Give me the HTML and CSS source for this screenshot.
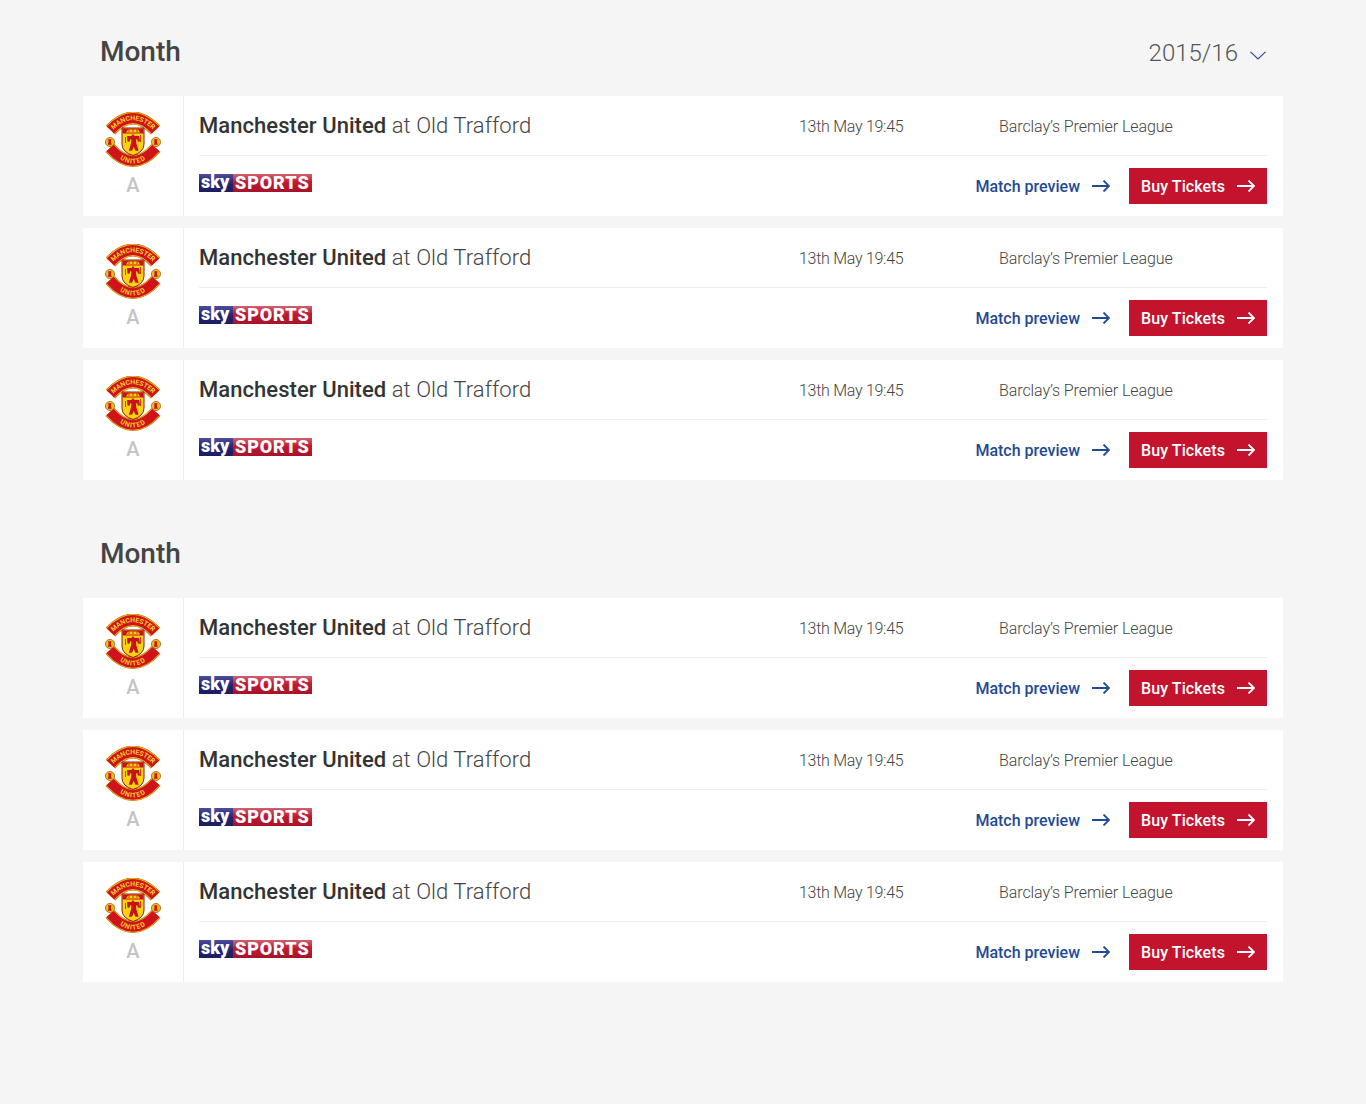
FILE: index.html
```html
<!DOCTYPE html>
<html lang="en">
  <head>
    <meta charset="utf-8">
    <title>Fixtures</title>
    <link rel="stylesheet" href="styles.css">
  </head>
  <body>
    <svg class="sprites" width="0" height="0" aria-hidden="true">
      <defs>
        <path id="crest-top" d="M6 20 Q28 -3.600 50 20" />
        <path id="crest-bottom" d="M6 39 Q28 64 50 39" />
        <symbol id="crest" viewBox="0 0 56 56">
          <path d="M5.500 18 Q28 -6 50.500 18" fill="none" stroke="#a8700c" stroke-width="13" />
          <path d="M5.500 18 Q28 -6 50.500 18" fill="none" stroke="#f0b818" stroke-width="12" />
          <path d="M5.500 18 Q28 -6 50.500 18" fill="none" stroke="#d0121b" stroke-width="10" />
          <text class="crest-text" font-size="6.800"><textPath href="#crest-top" startOffset="50%" text-anchor="middle">MANCHESTER</textPath></text>
          <path d="M5 36 Q28 62 51 36" fill="none" stroke="#a8700c" stroke-width="12" />
          <path d="M5 36 Q28 62 51 36" fill="none" stroke="#f0b818" stroke-width="11" />
          <path d="M5 36 Q28 62 51 36" fill="none" stroke="#d0121b" stroke-width="9.500" />
          <text class="crest-text crest-wide" font-size="6.800"><textPath href="#crest-bottom" startOffset="50%" text-anchor="middle">UNITED</textPath></text>
          <circle cx="5" cy="30" r="4.600" fill="#f0b818" stroke="#8a5a10" stroke-width=".7" />
          <circle cx="51" cy="30" r="4.600" fill="#f0b818" stroke="#8a5a10" stroke-width=".7" />
          <path d="M3.200 27.200h3.200l-.6 2.800 1 2.800H2.800l.8-2.800z" fill="#c5121b" />
          <path d="M49.200 27.200h3.200l-.6 2.800 1 2.800h-4l.8-2.800z" fill="#c5121b" />
          <path d="M17 16h22v16q0 8-11 11.500Q17 40 17 32z" fill="#fbd30c" stroke="#8c1a12" stroke-width="1" />
          <path d="M17.500 16.500h21v5h-21z" fill="#c5121b" />
          <path d="M21 20.500l2-3h10l2 3z" fill="#fbd30c" />
          <path d="M24 17v3M28 17v3M32 17v3" stroke="#c5121b" stroke-width=".9" />
          <path d="M22 24h4.500l.8-1.600h1.400l.8 1.600h4.500l1 5.500-2 .3-1-2.800-1 .8.4 3.600 2.200 7.400h-3.200l-1.700-4-1.700 4h-3.200l2.200-7.400.4-3.600-1-.8-1 2.800-2-.3z" fill="#c5121b" />
          <path d="M35.500 23v7M20.500 25v6" stroke="#c5121b" stroke-width=".8" />
        </symbol>
        <symbol id="arrow" viewBox="0 0 18 12">
          <path d="M0 6h17M11.500 .5 17 6l-5.500 5.500" fill="none" stroke="currentColor" stroke-width="1.800" />
        </symbol>
      </defs>
    </svg>

    <main class="page">
      <section class="month">
        <header class="month-head">
          <h2>Month</h2>
          <div class="season">
            <span>2015/16</span>
            <svg class="chevron" viewBox="0 0 16 9"><path d="M.5 .8 8 8l7.500-7.200" fill="none" stroke="#1f4a94" stroke-width="1.100" /></svg>
          </div>
        </header>

        <article class="fixture">
          <div class="badge"><svg class="crest"><use href="#crest" /></svg><span class="venue">A</span></div>
          <div class="details">
            <div class="info">
              <h3><strong>Manchester United</strong> at Old Trafford</h3>
              <span class="kickoff">13th May 19:45</span>
              <span class="league">Barclay’s Premier League</span>
            </div>
            <div class="actions">
              <div class="sky"><span class="sky-a">sky</span><span class="sky-b">SPORTS</span></div>
              <a class="preview" href="#">Match preview<svg class="arrow"><use href="#arrow" /></svg></a>
              <a class="buy" href="#">Buy Tickets<svg class="arrow"><use href="#arrow" /></svg></a>
            </div>
          </div>
        </article>

        <article class="fixture">
          <div class="badge"><svg class="crest"><use href="#crest" /></svg><span class="venue">A</span></div>
          <div class="details">
            <div class="info">
              <h3><strong>Manchester United</strong> at Old Trafford</h3>
              <span class="kickoff">13th May 19:45</span>
              <span class="league">Barclay’s Premier League</span>
            </div>
            <div class="actions">
              <div class="sky"><span class="sky-a">sky</span><span class="sky-b">SPORTS</span></div>
              <a class="preview" href="#">Match preview<svg class="arrow"><use href="#arrow" /></svg></a>
              <a class="buy" href="#">Buy Tickets<svg class="arrow"><use href="#arrow" /></svg></a>
            </div>
          </div>
        </article>

        <article class="fixture">
          <div class="badge"><svg class="crest"><use href="#crest" /></svg><span class="venue">A</span></div>
          <div class="details">
            <div class="info">
              <h3><strong>Manchester United</strong> at Old Trafford</h3>
              <span class="kickoff">13th May 19:45</span>
              <span class="league">Barclay’s Premier League</span>
            </div>
            <div class="actions">
              <div class="sky"><span class="sky-a">sky</span><span class="sky-b">SPORTS</span></div>
              <a class="preview" href="#">Match preview<svg class="arrow"><use href="#arrow" /></svg></a>
              <a class="buy" href="#">Buy Tickets<svg class="arrow"><use href="#arrow" /></svg></a>
            </div>
          </div>
        </article>
      </section>

      <section class="month">
        <header class="month-head">
          <h2>Month</h2>
        </header>

        <article class="fixture">
          <div class="badge"><svg class="crest"><use href="#crest" /></svg><span class="venue">A</span></div>
          <div class="details">
            <div class="info">
              <h3><strong>Manchester United</strong> at Old Trafford</h3>
              <span class="kickoff">13th May 19:45</span>
              <span class="league">Barclay’s Premier League</span>
            </div>
            <div class="actions">
              <div class="sky"><span class="sky-a">sky</span><span class="sky-b">SPORTS</span></div>
              <a class="preview" href="#">Match preview<svg class="arrow"><use href="#arrow" /></svg></a>
              <a class="buy" href="#">Buy Tickets<svg class="arrow"><use href="#arrow" /></svg></a>
            </div>
          </div>
        </article>

        <article class="fixture">
          <div class="badge"><svg class="crest"><use href="#crest" /></svg><span class="venue">A</span></div>
          <div class="details">
            <div class="info">
              <h3><strong>Manchester United</strong> at Old Trafford</h3>
              <span class="kickoff">13th May 19:45</span>
              <span class="league">Barclay’s Premier League</span>
            </div>
            <div class="actions">
              <div class="sky"><span class="sky-a">sky</span><span class="sky-b">SPORTS</span></div>
              <a class="preview" href="#">Match preview<svg class="arrow"><use href="#arrow" /></svg></a>
              <a class="buy" href="#">Buy Tickets<svg class="arrow"><use href="#arrow" /></svg></a>
            </div>
          </div>
        </article>

        <article class="fixture">
          <div class="badge"><svg class="crest"><use href="#crest" /></svg><span class="venue">A</span></div>
          <div class="details">
            <div class="info">
              <h3><strong>Manchester United</strong> at Old Trafford</h3>
              <span class="kickoff">13th May 19:45</span>
              <span class="league">Barclay’s Premier League</span>
            </div>
            <div class="actions">
              <div class="sky"><span class="sky-a">sky</span><span class="sky-b">SPORTS</span></div>
              <a class="preview" href="#">Match preview<svg class="arrow"><use href="#arrow" /></svg></a>
              <a class="buy" href="#">Buy Tickets<svg class="arrow"><use href="#arrow" /></svg></a>
            </div>
          </div>
        </article>
      </section>
    </main>
  </body>
</html>
```

FILE: styles.css
```css
*,
*:before,
*:after {
  box-sizing: border-box;
}

body {
  margin: 0;
  min-height: 1104px;
  background-color: #f5f5f5;
  color: #444;
  font-family: Roboto, Arial, sans-serif;
}

a {
  text-decoration: none;
}

.sprites {
  display: block;
  height: 0;
}

.crest-text {
  fill: #f7cf2b;
  font-family: Roboto, Arial, sans-serif;
  font-weight: 700;
}

.crest-wide {
  letter-spacing: .8px;
}

.page {
  width: 1200px;
  margin: 0 auto;
}

.month + .month {
  margin-top: 22px;
}

.month-head {
  display: flex;
  justify-content: space-between;
  align-items: center;
  height: 96px;
  padding: 6px 17px 0 17px;
}

.month-head h2 {
  margin: 0;
  font-size: 28px;
  font-weight: 500;
  color: #444;
}

.season {
  display: flex;
  align-items: center;
  gap: 12px;
  padding-top: 4px;
  font-size: 24px;
  font-weight: 300;
  color: #555;
}

.chevron {
  width: 16px;
  height: 9px;
  margin-top: 4px;
}

.fixture {
  display: flex;
  height: 120px;
  background-color: #fff;
  margin-bottom: 12px;
}

.badge {
  display: flex;
  flex-direction: column;
  align-items: center;
  width: 101px;
  padding-top: 16px;
  border-right: 1px solid #eee;
}

.crest {
  width: 56px;
  height: 56px;
}

.venue {
  margin-top: 5px;
  font-size: 20px;
  font-weight: 500;
  color: #c4c4c4;
}

.details {
  flex: 1;
  padding: 0 16px 0 15px;
}

.info {
  display: flex;
  align-items: center;
  height: 60px;
  border-bottom: 1px solid #eee;
}

.info h3 {
  width: 600px;
  margin: 0;
  font-size: 22px;
  font-weight: 300;
  letter-spacing: .06px;
  color: #444;
}

.info strong {
  font-weight: 500;
  color: #333;
}

.kickoff,
.league {
  padding-top: 2px;
  font-size: 16px;
  font-weight: 300;
  color: #444;
}

.kickoff {
  width: 200px;
  letter-spacing: -.28px;
}

.league {
  letter-spacing: -.08px;
}

.actions {
  display: flex;
  align-items: center;
  height: 60px;
}

.sky {
  display: flex;
  width: 113px;
  height: 18px;
  margin: -6px auto 0 0;
  border-radius: 1px;
  color: #fff;
  font-weight: 900;
  line-height: 18px;
}

.sky-a {
  width: 34px;
  padding-left: 2px;
  background: linear-gradient(#4d4d9c, #23246f 55%, #1c1c60);
  font-size: 18px;
  line-height: 15px;
}

.sky-b {
  flex: 1;
  padding-left: 2px;
  background: linear-gradient(#d4606f, #bf1b33 45%, #a81228);
  font-size: 18px;
  letter-spacing: .9px;
}

.preview,
.buy {
  display: flex;
  align-items: center;
  gap: 12px;
  font-size: 16px;
  font-weight: 500;
}

.preview {
  color: #1f4a94;
  margin-right: 19px;
}

.buy {
  justify-content: center;
  width: 138px;
  height: 36px;
  letter-spacing: .1px;
  color: #fff;
  background-color: #c3132d;
}

.arrow {
  width: 18px;
  height: 12px;
}
```
